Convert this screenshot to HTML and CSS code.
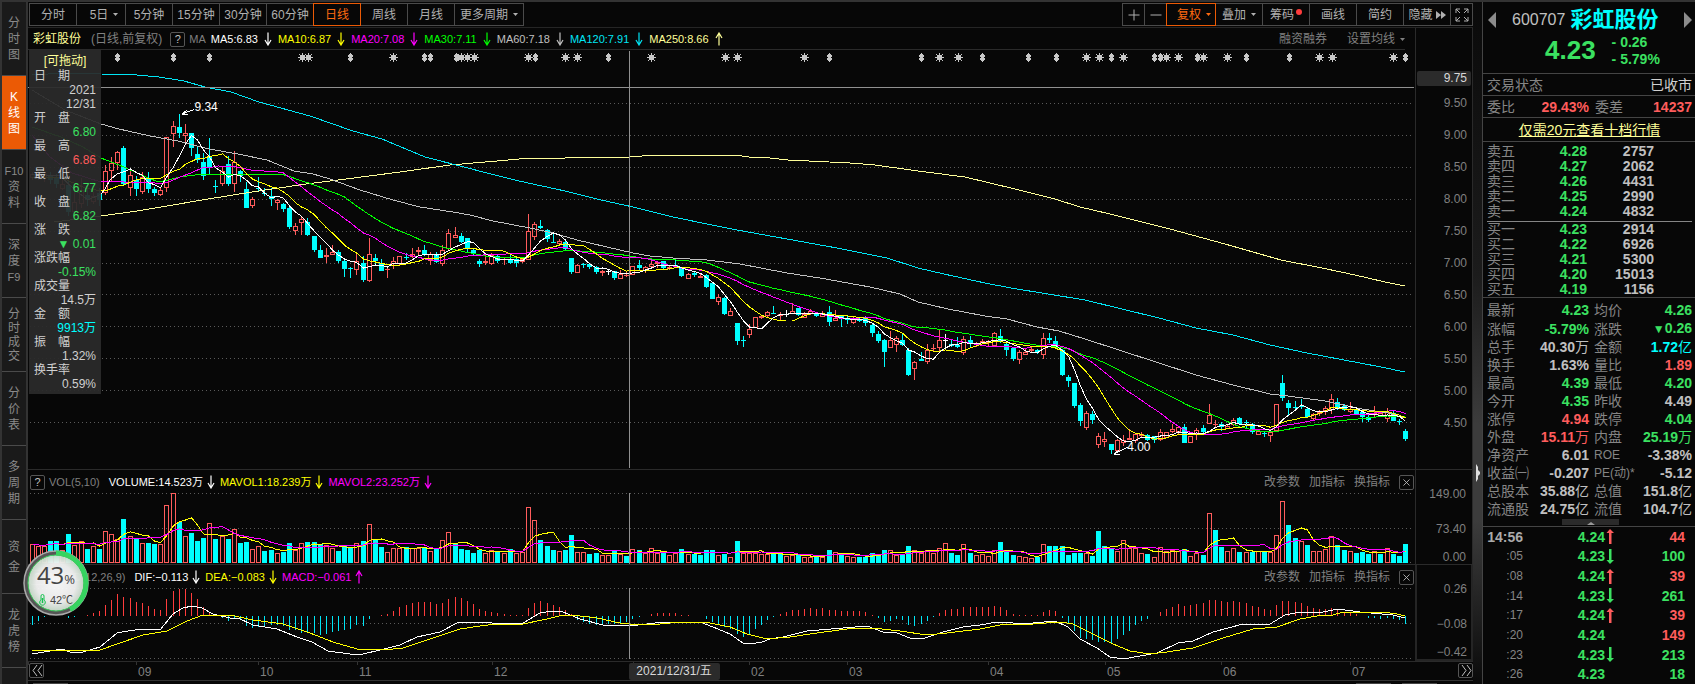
FILE: index.html
```html
<!DOCTYPE html>
<html lang="zh-CN">
<head>
    <meta charset="UTF-8">
    <meta name="viewport" content="width=device-width, initial-scale=1.0">
    <title>彩虹股份 600707</title>
    <link rel="stylesheet" href="styles.css">
</head>
<body>
    <svg class="sprite" aria-hidden="true">
        <symbol id="down" viewBox="0 0 8 14"><path d="M4 0.500V12M1 8l3 5 3-5" fill="none" stroke="currentColor" stroke-width="1.200"/></symbol>
        <symbol id="up" viewBox="0 0 8 14"><path d="M4 13.500V2M1 6l3-5 3 5" fill="none" stroke="currentColor" stroke-width="1.200"/></symbol>
        <symbol id="caret" viewBox="0 0 5 3"><path d="M0 0h5L2.500 3z" fill="currentColor"/></symbol>
        <symbol id="close" viewBox="0 0 15 15"><path d="M4 4l7 7M11 4l-7 7" fill="none" stroke="currentColor"/></symbol>
        <symbol id="fat-up" viewBox="0 0 8 15"><path d="M4 0L0.500 4H3v11h2.500V4H8z" fill="#ff5c5c"/></symbol>
        <symbol id="fat-down" viewBox="0 0 8 15"><path d="M4 15L0.500 11H3V0h2.500v11H8z" fill="#3be161"/></symbol>
    </svg>

    <nav class="side-nav">
        <a href="#"><span>分</span><span>时</span><span>图</span></a>
        <a href="#" class="active"><span>K</span><span>线</span><span>图</span></a>
        <a href="#"><span class="latin">F10</span><span>资</span><span>料</span></a>
        <a href="#"><span>深</span><span>度</span><span class="latin">F9</span></a>
        <a href="#" class="tight"><span>分</span><span>时</span><span>成</span><span>交</span></a>
        <a href="#"><span>分</span><span>价</span><span>表</span></a>
        <a href="#"><span>多</span><span>周</span><span>期</span></a>
        <a href="#" class="loose"><span>资</span><span>金</span></a>
        <a href="#"><span>龙</span><span>虎</span><span>榜</span></a>
    </nav>

    <main class="center">
        <div class="toolbar">
            <div class="btn-group">
                <button>分时</button>
                <button class="with-caret">5日<svg class="caret"><use href="#caret"/></svg></button>
                <button>5分钟</button>
                <button>15分钟</button>
                <button>30分钟</button>
                <button>60分钟</button>
                <button class="active">日线</button>
                <button>周线</button>
                <button>月线</button>
                <button class="wide">更多周期<svg class="caret"><use href="#caret"/></svg></button>
            </div>
            <div class="btn-group">
                <button class="square" aria-label="放大"><svg width="12" height="12"><path d="M6 0.500v11M0.500 6h11" stroke="currentColor"/></svg></button>
                <button class="square" aria-label="缩小"><svg width="12" height="12"><path d="M0.500 6h11" stroke="currentColor"/></svg></button>
                <button class="active with-caret">复权<svg class="caret"><use href="#caret"/></svg></button>
                <button>叠加<svg class="caret"><use href="#caret"/></svg></button>
                <button>筹码<i class="dot"></i></button>
                <button>画线</button>
                <button>简约</button>
                <button>隐藏<svg class="ff" viewBox="0 0 10 8"><path d="M0 0l5 4-5 4zM5 0l5 4-5 4z" fill="currentColor"/></svg></button>
                <button class="square" aria-label="全屏"><svg width="14" height="14"><path d="M1 5V1h4M9 1h4v4M13 9v4H9M5 13H1V9M1 1l4 4M13 1L9 5M13 13L9 9M1 13l4-4" fill="none" stroke="currentColor"/></svg></button>
            </div>
        </div>

        <section class="pane price-pane">
            <div class="plot">
                <div class="legend legend-line">
                    <b class="name">彩虹股份</b>
                    <span class="mode">(日线,前复权)</span>
                    <button class="help">?</button>
                    <span class="dim ma-tag">MA</span>
                    <span class="item white">MA5:6.83<svg><use href="#down"/></svg></span>
                    <span class="item yellow">MA10:6.87<svg><use href="#down"/></svg></span>
                    <span class="item magenta">MA20:7.08<svg><use href="#down"/></svg></span>
                    <span class="item lime">MA30:7.11<svg><use href="#down"/></svg></span>
                    <span class="item silver">MA60:7.18<svg><use href="#down"/></svg></span>
                    <span class="item cyan">MA120:7.91<svg><use href="#down"/></svg></span>
                    <span class="item cream">MA250:8.66<svg><use href="#up"/></svg></span>
                    <div class="links">
                        <a href="#">融资融券</a>
                        <a href="#">设置均线<svg class="caret"><use href="#caret"/></svg></a>
                    </div>
                </div>
                <div class="canvas">
                    <svg id="price" viewBox="28 50 1387 419" preserveAspectRatio="none"></svg>
                    <span class="mark mark-high">9.34</span>
                    <span class="mark mark-low">4.00</span>
                    <aside class="info">
                        <div class="info-title">[可拖动]</div>
                        <dl>
                            <dt><i>日</i><i>期</i></dt><dd>2021<br>12/31</dd>
                            <dt><i>开</i><i>盘</i></dt><dd class="green">6.80</dd>
                            <dt><i>最</i><i>高</i></dt><dd class="red">6.86</dd>
                            <dt><i>最</i><i>低</i></dt><dd class="green">6.77</dd>
                            <dt><i>收</i><i>盘</i></dt><dd class="green">6.82</dd>
                            <dt><i>涨</i><i>跌</i></dt><dd class="green">▼ 0.01</dd>
                            <dt>涨跌幅</dt><dd class="green">-0.15%</dd>
                            <dt>成交量</dt><dd>14.5万</dd>
                            <dt><i>金</i><i>额</i></dt><dd class="aqua">9913万</dd>
                            <dt><i>振</i><i>幅</i></dt><dd>1.32%</dd>
                            <dt>换手率</dt><dd>0.59%</dd>
                        </dl>
                    </aside>
                </div>
            </div>
            <div class="axis price-axis">
                <span class="cursor-price">9.75</span>
                <div class="ticks">
                    <span>9.50</span><span>9.00</span><span>8.50</span><span>8.00</span><span>7.50</span><span>7.00</span>
                    <span>6.50</span><span>6.00</span><span>5.50</span><span>5.00</span><span>4.50</span>
                </div>
            </div>
        </section>

        <section class="pane">
            <div class="plot">
                <div class="legend">
                    <button class="help">?</button>
                    <span class="dim ind-name">VOL(5,10)</span>
                    <span class="item white">VOLUME:14.523万<svg><use href="#down"/></svg></span>
                    <span class="item yellow">MAVOL1:18.239万<svg><use href="#down"/></svg></span>
                    <span class="item magenta">MAVOL2:23.252万<svg><use href="#down"/></svg></span>
                    <div class="links small">
                        <a href="#">改参数</a><a href="#">加指标</a><a href="#">换指标</a>
                        <button class="help" aria-label="关闭"><svg width="15" height="15"><use href="#close"/></svg></button>
                    </div>
                </div>
                <svg id="volume" class="sub" viewBox="28 493 1387 71" preserveAspectRatio="none"></svg>
            </div>
            <div class="axis sub-axis"><span>149.00</span><span>73.40</span><span>0.00</span></div>
        </section>

        <section class="pane macd-pane">
            <div class="plot">
                <div class="legend">
                    <button class="help">?</button>
                    <span class="dim ind-name">MACD(12,26,9)</span>
                    <span class="item white">DIF:−0.113<svg><use href="#down"/></svg></span>
                    <span class="item yellow">DEA:−0.083<svg><use href="#down"/></svg></span>
                    <span class="item magenta">MACD:−0.061<svg><use href="#up"/></svg></span>
                    <div class="links small">
                        <a href="#">改参数</a><a href="#">加指标</a><a href="#">换指标</a>
                        <button class="help" aria-label="关闭"><svg width="15" height="15"><use href="#close"/></svg></button>
                    </div>
                </div>
                <svg id="macd" class="sub" viewBox="28 588 1387 73" preserveAspectRatio="none"></svg>
            </div>
            <div class="axis sub-axis"><span>0.26</span><span>−0.08</span><span>−0.42</span></div>
        </section>

        <div class="date-row">
            <div class="months" id="months">
                <button class="help page-btn" aria-label="向前"><svg width="15" height="15"><path d="M7 2L3 7.500l4 5.500M12 2L8 7.500l4 5.500" fill="none" stroke="currentColor"/></svg></button>
                <span class="cursor-date">2021/12/31/五</span>
            </div>
            <div class="date-end"><button class="help" aria-label="向后"><svg width="15" height="15"><path d="M3 2l4 5.500L3 13M8 2l4 5.500L8 13" fill="none" stroke="currentColor"/></svg></button></div>
        </div>
        <div class="bottom-strip"><i></i><i></i><i></i></div>
    </main>

    <div class="splitter"><svg width="5" height="18"><path d="M0 0l2 3v3l2 2v2l-2 2v3l-2 3z" fill="#ddd"/></svg></div>

    <aside class="quote">
        <header>
            <div class="stock">
                <button aria-label="上一只"><svg width="8" height="16"><path d="M8 0v16L0 8z" fill="#8c8c8c"/></svg></button>
                <span class="code">600707</span><strong>彩虹股份</strong>
                <button class="next" aria-label="下一只"><svg width="8" height="16"><path d="M0 0v16l8-8z" fill="#8c8c8c"/></svg></button>
            </div>
            <div class="last">
                <b class="big">4.23</b>
                <div class="diff"><span>- 0.26</span><span>- 5.79%</span></div>
            </div>
        </header>
        <div class="line"><span>交易状态</span><span class="state">已收市</span></div>
        <div class="line quad"><span>委比</span><b class="red">29.43%</b><span>委差</span><b class="red">14237</b></div>
        <div class="line promo"><a href="#">仅需20元查看十档行情</a></div>
        <div class="book">
            <table>
                <tr><th>卖五</th><td>4.28</td><td>2757</td></tr>
                <tr><th>卖四</th><td>4.27</td><td>2062</td></tr>
                <tr><th>卖三</th><td>4.26</td><td>4431</td></tr>
                <tr><th>卖二</th><td>4.25</td><td>2990</td></tr>
                <tr><th>卖一</th><td>4.24</td><td>4832</td></tr>
            </table>
            <table>
                <tr><th>买一</th><td>4.23</td><td>2914</td></tr>
                <tr><th>买二</th><td>4.22</td><td>6926</td></tr>
                <tr><th>买三</th><td>4.21</td><td>5300</td></tr>
                <tr><th>买四</th><td>4.20</td><td>15013</td></tr>
                <tr><th>买五</th><td>4.19</td><td>1156</td></tr>
            </table>
        </div>
        <table class="stats">
            <tr><th>最新</th><td class="green">4.23</td><th>均价</th><td class="green">4.26</td></tr>
            <tr><th>涨幅</th><td class="green">-5.79%</td><th>涨跌</th><td class="green"><small>▼</small>0.26</td></tr>
            <tr><th>总手</th><td>40.30<i>万</i></td><th>金额</th><td class="aqua">1.72<i>亿</i></td></tr>
            <tr><th>换手</th><td>1.63%</td><th>量比</th><td class="red">1.89</td></tr>
            <tr><th>最高</th><td class="green">4.39</td><th>最低</th><td class="green">4.20</td></tr>
            <tr><th>今开</th><td class="green">4.35</td><th>昨收</th><td>4.49</td></tr>
            <tr><th>涨停</th><td class="red">4.94</td><th>跌停</th><td class="green">4.04</td></tr>
            <tr><th>外盘</th><td class="red">15.11<i>万</i></td><th>内盘</th><td class="green">25.19<i>万</i></td></tr>
            <tr><th>净资产</th><td>6.01</td><th class="en">ROE</th><td>-3.38%</td></tr>
            <tr><th>收益㈠</th><td>-0.207</td><th class="en">PE(动)*</th><td>-5.12</td></tr>
            <tr><th>总股本</th><td>35.88<i>亿</i></td><th>总值</th><td>151.8<i>亿</i></td></tr>
            <tr><th>流通股</th><td>24.75<i>亿</i></td><th>流值</th><td>104.7<i>亿</i></td></tr>
        </table>
        <button class="fold" aria-label="收起"><svg width="8" height="3"><path d="M0 3h8L4 0z" fill="#999"/></svg></button>
        <ul class="ticks-list">
            <li class="first"><time>14:56</time><b>4.24</b><svg><use href="#fat-up"/></svg><em class="red">44</em></li>
            <li><time>:05</time><b>4.23</b><svg><use href="#fat-down"/></svg><em>100</em></li>
            <li><time>:08</time><b>4.24</b><svg><use href="#fat-up"/></svg><em class="red">39</em></li>
            <li><time>:14</time><b>4.23</b><svg><use href="#fat-down"/></svg><em>261</em></li>
            <li><time>:17</time><b>4.24</b><svg><use href="#fat-up"/></svg><em class="red">39</em></li>
            <li><time>:20</time><b>4.24</b><svg></svg><em class="red">149</em></li>
            <li><time>:23</time><b>4.23</b><svg><use href="#fat-down"/></svg><em>213</em></li>
            <li><time>:26</time><b>4.23</b><svg></svg><em>18</em></li>
        </ul>
    </aside>

    <div class="monitor">
        <svg class="ring" viewBox="0 0 66 66">
            <defs>
                <radialGradient id="ball"><stop offset="0" stop-color="#fff"/><stop offset="0.700" stop-color="#f2f2f2"/><stop offset="1" stop-color="#c9dccb"/></radialGradient>
            </defs>
            <circle cx="33" cy="33" r="28" fill="url(#ball)" fill-opacity="0.960"/>
            <circle cx="33" cy="33" r="30" fill="none" stroke="#555" stroke-width="4"/>
            <circle cx="33" cy="33" r="32" fill="none" stroke="#aaa" stroke-width="1.500"/>
            <path d="M33 3a30 30 0 0 1 14 56.500" fill="none" stroke="#35d460" stroke-width="5"/>
            <circle cx="33" cy="33" r="28" fill="none" stroke="#3fce5f" stroke-width="1"/>
        </svg>
        <div class="load">43<small>%</small></div>
        <div class="temp"><svg width="7" height="12" viewBox="0 0 7 12"><path d="M2 6V2a1.500 1.500 0 0 1 3 0v4a2.800 2.800 0 1 1-3 0z" fill="none" stroke="#17c150"/><path d="M3.500 4v5" stroke="#17c150" stroke-width="1.500"/></svg>42℃</div>
    </div>

    <script src="chart.js"></script>
</body>
</html>
```
FILE: styles.css
```css
* {
    box-sizing: border-box;
}

body {
    margin: 0;
    height: 100vh;
    min-height: 684px;
    display: flex;
    background: #070707;
    color: #c0c0c0;
    font: 12px/14px "Liberation Sans", "Noto Sans CJK SC", sans-serif;
    overflow: hidden;
    border-top: 2px solid #333;
}

a {
    color: inherit;
    text-decoration: none;
}

button {
    margin: 0;
    padding: 0;
    border: 0;
    background: none;
    color: inherit;
    font: inherit;
}

i, em {
    font-style: normal;
}

.sprite {
    position: absolute;
    width: 0;
    height: 0;
}

.white { color: #fff; }
.yellow { color: #ff0; }
.magenta { color: #f0f; }
.lime { color: #0f0; }
.silver { color: #c0c0c0; }
.cyan { color: #00e5f5; }
.cream { color: #ffff99; }
.green { color: #3be161; }
.red { color: #ff5c5c; }
.aqua { color: #0ff; }

/* left navigation */
.side-nav {
    width: 28px;
    background: #1a1a1a;
    border-left: 2px solid #333;
    border-right: 2px solid #333;
}

.side-nav a {
    height: 74px;
    display: flex;
    flex-direction: column;
    align-items: center;
    justify-content: center;
    line-height: 16px;
    color: #8a8a8a;
    border-bottom: 1px solid #4a4a4a;
}

.side-nav a.active {
    background: #eb5a05;
    color: #fff;
}

.side-nav a.tight { line-height: 14px; }
.side-nav a.loose { line-height: 20px; }
.side-nav .latin { font-size: 11px; }

/* centre column */
.center {
    flex: 1;
    min-width: 0;
    display: flex;
    flex-direction: column;
}

.toolbar {
    height: 26px;
    padding: 1px 0 0 1px;
    display: flex;
    justify-content: space-between;
    border-bottom: 1px solid #252525;
}

.btn-group {
    display: flex;
}

.btn-group button {
    width: 48px;
    height: 23px;
    margin-right: -1px;
    display: flex;
    align-items: center;
    justify-content: center;
    border: 1px solid #4a4a4a;
    color: #b0b0b0;
    white-space: nowrap;
}

.btn-group button.square { width: 23px; }
.btn-group button.wide { width: 70px; }
.btn-group button.with-caret { width: 50px; padding-left: 6px; }

.btn-group button:last-child { margin-right: 0; }

.btn-group button.active {
    border-color: #eb5a05;
    color: #ff6a10;
    position: relative;
}

.caret {
    width: 5px;
    height: 3px;
    margin-left: 5px;
    vertical-align: middle;
}

.dot {
    width: 6px;
    height: 6px;
    margin: -6px 0 0 2px;
    border-radius: 50%;
    background: #ff3c3c;
}

.ff {
    width: 10px;
    height: 8px;
    margin-left: 3px;
}

.pane {
    display: flex;
    border-bottom: 1px solid #2a2a2a;
}

.price-pane {
    flex: 1;
    min-height: 0;
}

.plot {
    flex: 1;
    min-width: 0;
    display: flex;
    flex-direction: column;
}

.legend {
    height: 23px;
    padding: 1px 0 0 2px;
    display: flex;
    align-items: center;
    font-size: 11px;
    white-space: nowrap;
}

.legend-line {
    height: 22px;
    margin-right: 10px;
    padding-left: 5px;
    border-bottom: 1px solid #2a2a2a;
}

.legend .name {
    font-size: 12px;
    font-weight: normal;
    color: #ffff99;
}

.mode {
    margin: 0 8px 0 10px;
    font-size: 12px;
    color: #808080;
}

.dim {
    color: #808080;
}

.ma-tag {
    margin: 0 5px 0 4px;
}

.ind-name {
    margin: 0 9px 0 4px;
}

.help {
    width: 15px;
    height: 15px;
    flex: none;
    display: flex;
    align-items: center;
    justify-content: center;
    border: 1px solid #555;
    border-radius: 2px;
    color: #c0c0c0;
    font-size: 11px;
    line-height: 13px;
}

.item {
    display: flex;
    align-items: center;
    margin-right: 5px;
}

.legend-line .item {
    margin-right: 6px;
}

.item svg {
    width: 8px;
    height: 14px;
    margin-left: 6px;
}

.pane:not(.price-pane) .item svg {
    margin-left: 4px;
}

.links {
    margin-left: auto;
    display: flex;
    align-items: center;
    gap: 20px;
    font-size: 12px;
    color: #808080;
}

.links.small {
    gap: 9px;
    margin-right: 1px;
}

.canvas {
    position: relative;
    flex: 1;
    min-height: 0;
}

.canvas > svg, .sub {
    display: block;
    width: 100%;
    height: 100%;
    shape-rendering: crispEdges;
}

.sub {
    height: 71px;
}

.macd-pane .sub {
    height: 73px;
}

.canvas path, .sub path {
    fill: none;
    vector-effect: non-scaling-stroke;
}

.canvas path.event {
    fill: #c8c8c8;
}

.mark {
    position: absolute;
    color: #fff;
}

.mark-high { left: 12%; top: 12%; }
.mark-low { left: 79.250%; top: 93%; }

/* floating box with values under the cursor */
.info {
    position: absolute;
    left: 1px;
    top: 0;
    width: 72px;
    padding: 4px 5px 3px;
    background: rgba(43, 43, 43, 0.94);
    color: #d0d0d0;
}

.info-title {
    text-align: center;
    color: #ffff99;
}

.info dl {
    margin: 1px 0 0;
}

.info dt {
    width: 36px;
    display: flex;
    justify-content: space-between;
}

.info dd {
    margin: 0;
    text-align: right;
}

.axis {
    width: 58px;
    padding-right: 6px;
    display: flex;
    flex-direction: column;
    align-items: flex-end;
    border-left: 1px solid #2a2a2a;
    border-right: 1px solid #2a2a2a;
    color: #808080;
}

.price-axis {
    padding: 43px 1px 30px 1px;
}

.cursor-price {
    width: 100%;
    height: 15px;
    padding-right: 4px;
    border-radius: 2px;
    background: #2b2b2b;
    color: #d8d8d8;
    line-height: 15px;
    text-align: right;
}

.ticks {
    flex: 1;
    padding: 1px 4px 0 0;
    display: flex;
    flex-direction: column;
}

.ticks span {
    flex: 1;
    display: flex;
    align-items: center;
}

.sub-axis {
    padding-top: 17px;
}

.sub-axis span:nth-child(2) {
    margin: 21px 0 14px;
}

.macd-pane .axis {
    border: 2px solid #252525;
    border-top: 0;
    padding-right: 4px;
}

.date-row {
    height: 19px;
    display: flex;
    border-bottom: 1px solid #333;
}

.months {
    position: relative;
    flex: 1;
    display: flex;
    color: #808080;
}

.month {
    padding: 3px 0 0 2px;
    background: linear-gradient(#333, #333) 0 0 / 1px 3px no-repeat;
}

.page-btn {
    position: absolute;
    left: 1px;
    top: 1px;
}

.cursor-date {
    position: absolute;
    left: 43.300%;
    top: 1px;
    width: 91px;
    height: 17px;
    border-radius: 2px;
    background: #2b2b2b;
    color: #d8d8d8;
    line-height: 17px;
    text-align: center;
}

.date-end {
    width: 58px;
    padding: 1px 0 0 43px;
}

.bottom-strip {
    height: 3px;
    padding: 2px 36px 0 5px;
    display: flex;
    gap: 11px;
}

.bottom-strip i {
    width: 35px;
    background: #444;
}

.bottom-strip i:first-child {
    margin-right: auto;
}

.splitter {
    width: 9px;
    display: flex;
    align-items: center;
    padding: 260px 0 0 3px;
    background: linear-gradient(#0a0a0a, #1c1c1c 40%, #3c3c3c 62%, #3c3c3c 76%, #0a0a0a);
}

/* quote panel */
.quote {
    width: 213px;
    display: flex;
    flex-direction: column;
    border-left: 1px solid #444;
    font-size: 14px;
}

.quote header {
    height: 72px;
    border-bottom: 1px solid #444;
}

.stock {
    display: flex;
    align-items: center;
    height: 35px;
    padding: 0 3px 0 5px;
    line-height: 24px;
}

.code {
    margin: 0 5px 0 16px;
    font-size: 16px;
}

.stock strong {
    font-size: 22px;
    color: #0ff;
}

.stock button {
    height: 16px;
    line-height: 0;
}

.stock .next {
    margin-left: auto;
}

.last {
    display: flex;
    gap: 16px;
    padding-left: 62px;
    color: #3be161;
}

.big {
    font-size: 26px;
    line-height: 26px;
}

.diff {
    display: flex;
    flex-direction: column;
    margin-top: -3px;
    font-weight: bold;
    line-height: 17px;
}

.line {
    height: 22px;
    padding: 0 3px 0 4px;
    display: flex;
    align-items: center;
    justify-content: space-between;
    border-bottom: 1px solid #444;
    color: #858585;
}

.line .state {
    color: #d0d0d0;
}

.line b {
    text-align: right;
}

.quad {
    display: grid;
    grid-template-columns: 36px 66px 36px 1fr;
}

.quad span:nth-child(3) {
    padding-left: 6px;
}

.stats th:nth-child(3) {
    padding-left: 3px;
}

.promo {
    height: 24px;
    justify-content: center;
    color: #ffff99;
}

.promo a {
    text-decoration: underline;
}

.quote table {
    width: 100%;
    border-collapse: collapse;
    table-layout: fixed;
}

.quote th {
    padding: 0;
    color: #858585;
    font-weight: normal;
    text-align: left;
    white-space: nowrap;
}

.quote .stats th:nth-child(3) {
    padding-left: 5px;
}

.quote td {
    padding: 0;
    text-align: right;
    font-weight: bold;
    white-space: nowrap;
}

.quote td i {
    font-weight: normal;
}

.book {
    padding: 2px 3px 0 4px;
    border-bottom: 1px solid #444;
}

.book tr {
    height: 15px;
    line-height: 15px;
}

.book th { width: 36px; }
.book td:nth-child(2) { width: 64px; color: #3be161; }

.quote .book td:nth-child(3) {
    padding-right: 38px;
}

.book table + table {
    margin-top: 2px;
    border-top: 1px solid #858585;
}

.quote .stats {
    width: 205px;
    margin: 3px 0 0 4px;
}

.stats tr {
    height: 18px;
    line-height: 18px;
}

.stats th { width: 42px; }
.stats td:nth-child(2) { width: 60px; }
.stats td:nth-child(4) { width: 61px; }
.stats th.en { font-size: 12px; }
.stats small { font-size: 12px; }

.fold {
    width: 57px;
    height: 6px;
    margin: 1px 0 1px 79px;
    background: #2b2b2b;
    line-height: 0;
}

.ticks-list {
    flex: 1;
    margin: 0;
    padding: 0;
    list-style: none;
    display: flex;
    flex-direction: column;
    border-top: 1px solid #444;
}

.ticks-list li {
    flex: 1;
    display: grid;
    grid-template-columns: 40px 82px 14px 1fr;
    align-items: center;
    padding-right: 10px;
    text-align: right;
    color: #3be161;
}

.ticks-list time {
    color: #858585;
    font-size: 12px;
}

.ticks-list .first time {
    color: #aaa;
    font-size: 14px;
    font-weight: bold;
}

.ticks-list svg {
    width: 8px;
    height: 15px;
    margin-left: 1px;
}

.ticks-list em {
    font-weight: bold;
}

/* desktop load ball */
.monitor {
    position: absolute;
    left: 23px;
    bottom: 68px;
    width: 66px;
    height: 66px;
    color: #444;
    text-align: center;
}

.ring {
    position: absolute;
    inset: 0;
}

.load {
    position: relative;
    padding-top: 13px;
    font: 24px/24px "Open Sans", sans-serif;
}

.load small {
    font-size: 13px;
}

.temp {
    position: relative;
    margin-top: 2px;
    font-size: 11px;
}

.temp svg {
    margin-right: 4px;
    vertical-align: -2px;
}
```
FILE: chart.js
```javascript
// one entry per day: kind (r up, c down, w flat), high, body top, body bottom, low
const candles = `
r 172 174 178 180|r 171 173 177 180|r 172 174 178 182|c 172 176 180 184|c 174 177 184 188|r 180 184 189 190|c 180 185 212 216|r 190 202 212 214|
r 178 190 204 208|c 184 195 200 206|r 192 196 202 204|c 188 193 200 206|r 165 171 193 195|r 157 163 171 181|r 151 152 163 170|c 146 148 184 186|
r 170 175 188 196|c 176 180 189 196|r 172 177 192 194|c 172 179 189 193|c 187 189 193 196|r 187 190 195 196|r 137 137 188 192|r 121 126 134 147|
c 114 127 133 138|r 124 133 136 143|c 133 133 148 156|c 146 154 160 163|c 153 162 176 180|c 138 157 167 174|c 180 186 187 193|r 167 171 184 186|
c 156 164 184 186|r 151 162 184 192|c 170 171 176 182|c 182 189 208 208|r 197 199 206 208|c 177 188 189 191|c 188 193 194 196|c 188 196 199 206|
r 199 200 203 210|c 203 204 209 212|c 207 208 227 229|r 223 226 231 235|r 217 219 223 235|c 218 222 235 236|c 236 236 250 252|c 245 250 258 258|
r 248 255 257 263|r 245 252 255 255|c 250 252 261 263|c 259 261 269 277|c 267 268 269 278|r 253 261 270 275|c 256 263 280 282|r 238 254 281 282|
c 254 258 261 265|c 259 263 271 271|r 267 269 270 278|r 257 261 264 269|r 256 256 264 265|c 253 257 258 260|r 248 254 257 258|r 247 250 252 256|
c 245 250 255 256|r 252 254 261 265|c 252 255 262 263|r 245 250 264 266|r 229 233 249 250|r 227 235 238 238|c 233 236 242 243|c 238 238 248 252|
c 249 250 254 255|c 259 261 264 267|r 255 261 263 265|r 253 255 264 265|c 255 256 261 263|r 257 259 260 265|c 255 260 263 264|c 258 259 263 267|
r 257 259 262 263|r 214 231 260 260|r 222 224 237 240|c 220 226 228 229|c 229 230 239 242|c 234 242 243 243|r 239 241 244 244|c 241 242 249 250|
c 258 258 272 274|r 264 265 273 273|c 263 264 265 268|c 263 264 267 269|c 266 267 272 274|r 270 271 273 276|w 269 271 272 275|c 271 271 278 280|
r 270 274 279 279|r 272 275 276 277|r 266 266 275 275|c 260 265 268 271|r 266 267 271 273|r 260 264 267 269|r 261 262 264 268|c 261 261 268 269|
r 266 267 269 270|c 260 265 266 268|c 267 268 276 277|r 273 274 279 279|c 271 273 275 277|r 273 276 278 278|c 274 275 287 288|c 283 283 299 299|
r 294 297 302 305|c 297 298 314 315|r 308 311 316 316|c 323 323 341 345|c 336 340 341 347|r 324 329 335 338|r 317 317 328 328|r 315 316 318 319|
r 311 312 316 317|c 306 313 314 314|r 312 314 316 321|w 310 314 315 317|r 303 311 314 314|c 308 308 315 316|r 312 314 318 318|r 309 311 314 315|
c 312 313 316 317|r 311 314 317 317|c 306 312 322 326|r 310 318 321 321|c 315 315 319 327|c 315 319 320 324|r 317 319 323 324|c 317 319 321 322|
c 317 318 323 326|c 323 325 333 337|c 331 334 341 343|c 339 340 352 367|r 331 340 348 348|r 336 338 345 352|c 333 340 345 346|c 348 350 375 376|
r 361 362 369 380|c 352 359 361 361|r 344 350 362 364|r 344 348 349 352|r 329 340 348 352|w 334 340 341 348|c 340 344 346 347|c 337 345 347 348|
r 336 339 353 355|c 336 340 344 347|r 342 343 345 347|r 339 341 343 344|r 340 341 343 346|r 332 333 346 347|c 329 336 341 343|c 342 344 350 356|
c 347 348 359 361|r 350 352 360 364|r 349 352 355 355|r 347 349 351 353|c 349 350 352 354|r 333 338 355 359|c 333 338 340 343|c 336 341 347 348|
c 349 350 375 376|c 375 377 381 387|c 383 383 406 408|c 403 405 421 426|r 411 413 428 430|c 411 414 420 424|r 433 436 445 448|r 432 439 442 447|
c 444 444 450 454|r 439 440 451 452|r 435 440 443 446|r 429 438 440 440|r 433 434 441 443|r 432 434 436 437|c 434 435 440 441|c 436 436 440 443|
r 429 432 440 441|r 432 432 438 438|r 424 429 432 433|r 426 427 432 434|c 424 427 443 443|r 436 436 443 443|r 428 430 434 440|c 425 428 432 433|
r 404 415 424 424|r 420 424 425 428|c 422 424 427 431|r 424 426 429 429|r 418 420 425 426|c 417 418 424 424|c 420 422 423 428|c 423 424 432 434|
r 430 431 435 435|c 431 433 434 437|r 430 432 436 442|r 404 404 431 431|c 375 383 398 401|c 400 403 408 415|c 401 407 408 411|c 399 406 407 409|
c 407 409 417 418|r 413 414 419 420|r 410 412 414 416|r 406 408 411 415|r 394 399 410 414|c 398 402 408 410|c 404 406 410 411|r 402 409 412 413|
c 408 409 414 415|c 411 412 417 422|c 415 417 420 422|r 406 413 415 417|r 411 413 416 417|r 408 412 419 422|c 411 413 421 421|c 419 421 422 425|
c 429 431 439 441`.trim().split('|').map(row => {
    const [kind, ...v] = row.trim().split(' ');
    return [kind, ...v.map(Number)];
});

// bar heights, negative = falling day
const volumes = [
    19, 17, 17, -22, -22, 13, -29, 18, 22, -14, 17, -14, 32, 29, 24, -44, 27, -24, 20, -20, -19, 19, 58, 70, -41,
    27, -30, -22, -25, 40, -24, 27, -24, 34, -20, -21, 14, 17, -12, -13, 10, -11, -20, 13, 20, -21, -21, -19, 18, 15,
    -12, -17, -15, 20, -22, 39, -23, -16, 11, 15, 15, -16, 15, 15, -15, 12, -14, 23, 31, -19, -14, -13, -10, -13, 10,
    13, -11, 10, -14, 10, 11, 56, 43, -23, -17, -13, 12, -13, -28, 11, 11, -9, -10, 8, 8, -13, 9, -7, 14, -13,
    10, 15, 10, -10, 8, 10, -14, 9, -9, -8, -13, -13, 8, -9, 6, -22, 10, 10, 10, 9, 9, -9, -9, 7, 8,
    -8, 6, 6, -7, 6, -13, 11, -10, 7, 6, -6, -6, -10, -9, -13, 13, 8, -8, -17, 13, 10, 13, 10, 15, 20,
    -10, -8, 19, -10, 8, 9, 7, 13, -21, -11, -8, 7, 6, 5, -6, 19, -17, -17, -17, -8, -10, -10, 10, -7, -32,
    -17, -15, 12, 23, 15, 15, 10, -9, 6, 16, 12, 13, 12, -14, 7, 10, -8, 50, -33, -16, 12, 15, -11, 11, -11,
    12, -11, 11, 28, 62, -38, -25, 22, -18, 12, 12, 14, 27, -18, -13, 12, -10, -11, -9, 12, -9, 15, -9, -7, -19
];

const macdBars = [
    -9, -5, -1, 0, 0, 0, -2, -1, 0, 1, 3, 5, 11, 16, 22, 19, 18, 14, 13, 10, 7, 6, 17, 25, 27,
    27, 23, 17, 9, 4, 1, -2, -5, -3, -4, -10, -12, -11, -10, -9, -9, -10, -14, -14, -17, -17, -17, -19, -18, -16,
    -15, -14, -13, -9, -10, -3, 0, 1, 2, 5, 9, 11, 13, 14, 14, 14, 12, 13, 17, 19, 18, 15, 12, 7, 5,
    4, 3, 2, 1, 1, 1, 8, 13, 15, 13, 11, 9, 6, 2, -4, -6, -8, -9, -8, -8, -8, -7, -6, -3, -1,
    0, 2, 3, 3, 3, 3, 1, 1, 0, 0, -3, -6, -8, -11, -13, -18, -21, -18, -13, -9, -4, -1, 2, 4, 6,
    6, 7, 8, 7, 8, 6, 6, 5, 5, 5, 5, 4, 1, -2, -6, -5, -3, -4, -9, -10, -8, -5, -1, 3, 6,
    7, 7, 9, 9, 9, 9, 9, 10, 9, 6, 2, 1, 1, 1, 1, 4, 6, 5, -2, -7, -15, -22, -23, -24, -26,
    -26, -27, -23, -19, -15, -9, -5, -3, 0, 4, 7, 9, 12, 10, 11, 12, 13, 16, 16, 15, 14, 15, 14, 13, 10,
    9, 7, 6, 11, 15, 15, 14, 13, 10, 8, 7, 7, 8, 7, 4, 3, 2, 0, -2, -2, -3, -2, -3, -4, -8
];

const lead = {
    5: '32,174 60,176 75,190 88,200 101,194 105,189 110,180 117,174 126,171',
    10: '32,178 60,177 85,188 101,191 108,190 118,186 124,185 133,181 143,178 155,179',
    20: '32,135 50,157 72,173 101,182 112,181 124,182 143,182 155,183 161,184 171,181 180,177 191,173 202,168 213,167 218,166',
    30: '32,127 61,137 83,147 101,158 124,167 137,173 148,178 159,182 168,180 180,177 195,175 205,174 279,174'
};

const ma60 = '32,90 65,110 101,124 119,129 150,136 178,141 209,149 238,154 267,160 294,171 313,174 330,179 360,190 393,200 420,207 453,212 470,215 493,221 530,228 553,233 577,240 607,247 633,253 650,256 673,258 707,260 740,264 787,273 820,278 870,287 900,294 918,302 948,309 985,316 1007,319 1037,327 1059,331 1085,339 1122,351 1159,363 1196,375 1233,385 1270,394 1288,396 1325,401 1362,409 1388,413 1405,418';
const ma120 = '32,75 65,73 101,74 137,75 159,77 184,81 205,87 231,92 259,102 310,116 353,131 382,139 425,157 468,168 483,172 519,181 565,191 601,200 633,207 673,217 707,224 737,230 787,239 837,248 887,258 918,268 944,274 985,283 1011,288 1048,294 1085,300 1122,309 1159,318 1196,328 1233,335 1270,345 1307,353 1344,360 1381,367 1405,372';
const ma250 = '54,222 101,216 137,211 173,205 202,200 252,192 306,184 346,179 400,172 450,165 497,161 530,158 565,158 581,157 630,157 655,155 734,155 749,157 770,158 788,160 850,163 875,165 918,171 965,177 1015,189 1055,199 1080,207 1110,214 1170,229 1225,244 1281,260 1322,268 1355,275 1385,282 1405,286';
const dif = '32,654 50,651 62,649 73,653 83,652 100,647 117,633 128,631 142,629 160,630 173,614 183,608 192,606 202,608 213,614 230,618 238,618 253,625 277,629 297,637 312,642 328,651 350,654 363,654 380,650 400,645 417,637 440,632 457,623 480,622 503,624 523,623 540,613 552,611 563,612 580,619 603,625 630,626 647,624 663,622 680,622 700,622 713,627 730,634 743,643 750,644 762,642 770,639 783,637 807,631 843,628 867,626 883,632 897,633 910,638 922,639 943,632 963,627 980,625 997,622 1013,623 1033,623 1055,621 1068,627 1080,639 1097,648 1110,657 1123,659 1140,656 1157,653 1178,643 1193,641 1213,632 1243,624 1270,624 1285,615 1300,612 1323,612 1338,609 1360,612 1393,615 1405,618';
const dea = '32,650 67,650 100,650 120,643 143,635 167,631 187,621 203,615 230,615 253,620 283,624 310,633 333,642 357,649 383,650 403,648 433,638 460,629 480,626 497,624 523,624 547,619 563,615 580,616 597,618 620,623 630,624 660,624 680,622 710,623 730,627 747,634 767,639 790,637 817,633 847,629 873,628 900,631 927,635 947,633 980,629 1000,625 1033,624 1060,622 1073,624 1093,634 1113,644 1130,651 1150,654 1167,652 1193,648 1223,638 1253,629 1277,627 1300,619 1317,616 1333,615 1343,612 1383,612 1397,614 1405,616';

const suns = [302, 308, 393, 461, 467, 474, 528, 565, 577, 651, 725, 737, 804, 939, 958, 1086, 1099, 1123, 1166, 1178, 1203, 1227, 1319, 1332, 1393];
const arrows = [117, 173, 209, 350, 424, 430, 456, 535, 608, 829, 921, 982, 1028, 1056, 1111, 1154, 1160, 1197, 1246, 1289, 1405];

const colors = { r: '#ff5c5c', c: '#00ffff', w: '#ffffff' };
const dayX = i => Math.floor(32 + i * 6.1314) + 0.5;

function path(d, color, extra = '') {
    return `<path d="${d}" stroke="${color}" ${extra}/>`;
}

function line(points, color) {
    return path('M' + points.trim().split(' ').join('L'), color);
}

function grid(levels) {
    return levels.map(y => path(`M30 ${y}H1412`, '#5a5a5a', 'stroke-dasharray="1 3"')).join('');
}

function average(values, n, start) {
    const out = [];
    for (let i = start; i < values.length; i++) {
        const part = values.slice(Math.max(0, i - n + 1), i + 1);
        out.push(dayX(i) + ',' + (part.reduce((a, b) => a + b, 0) / part.length).toFixed(1));
    }
    return out.join(' ');
}

function drawPrice() {
    const levels = [103, 135, 167, 199, 231, 263, 294, 326, 358, 390, 422].map(y => y + 0.5);
    let html = grid(levels);
    candles.forEach(([kind, high, top, bottom, low], i) => {
        const x = dayX(i);
        const c = colors[kind];
        html += path(`M${x} ${high}V${top}M${x} ${bottom}V${low}`, c);
        if (kind === 'c') {
            html += `<rect x="${x - 2.5}" y="${top}" width="5" height="${Math.max(1, bottom - top)}" fill="${c}"/>`;
        } else if (bottom - top < 2) {
            html += path(`M${x - 2.5} ${top + 0.5}H${x + 2.5}`, c);
        } else {
            html += path(`M${x - 2} ${top + 0.5}h4V${bottom - 0.5}h-4z`, c);
        }
    });
    const closes = candles.map(c => c[0] === 'r' ? c[2] : c[3]);
    html += line(ma250, '#ffff99') + line(ma120, '#00e5f5') + line(ma60, '#c0c0c0');
    html += line(lead[30] + ' ' + average(closes, 30, 41), '#00ff00');
    html += line(lead[20] + ' ' + average(closes, 20, 31), '#ff00ff');
    html += line(lead[10] + ' ' + average(closes, 10, 21), '#ffff00');
    html += line(lead[5] + ' ' + average(closes, 5, 16), '#ffffff');

    suns.forEach(x => {
        html += `<rect x="${x - 2}" y="55" width="5" height="5" fill="#c8c8c8"/>`;
        html += path(`M${x + 0.5} 53v9M${x - 4} 57.5h9M${x - 3} 54l7 7M${x + 4} 54l-7 7`, '#c8c8c8');
    });
    arrows.forEach(x => {
        html += `<path class="event" d="M${x} 53h1v9h-1zM${x - 1} 54h3v7h-3zM${x - 2} 55h5v2h-5zM${x - 2} 58h5v2h-5z"/>`;
    });

    // cursor cross and high / low pointers
    html += path('M28 87.5H1414', '#909090') + path('M629.5 51V468', '#909090');
    html += path('M194 109.5L182 114M187 110L182 114L188 114.5', '#fff');
    html += path('M1128 447L1114 454M1119 450L1114 454L1120 455', '#fff');
    document.getElementById('price').innerHTML = html;
}

function drawVolume() {
    const base = 563;
    let html = grid([493.5, 528.5, 562.5]);
    volumes.forEach((v, i) => {
        const x = dayX(i);
        if (v < 0) {
            html += `<rect x="${x - 2.5}" y="${base + v}" width="5" height="${-v}" fill="#0ff"/>`;
        } else {
            html += path(`M${x - 2} ${base - 0.5}V${base - v + 0.5}h4V${base - 0.5}z`, '#ff5c5c');
        }
    });
    const tops = volumes.map(v => base - Math.abs(v));
    html += line(average(tops, 5, 0), '#ffff00') + line(average(tops, 10, 0), '#ff00ff');
    html += path('M629.5 493V564', '#909090');
    document.getElementById('volume').innerHTML = html;
}

function drawMacd() {
    const zero = 615.5;
    let html = grid([588.5, 623.5, 658.5]);
    macdBars.forEach((v, i) => {
        if (v) html += path(`M${dayX(i)} ${zero}v${-v}`, v > 0 ? '#ff3c3c' : '#00e5f5');
    });
    html += line(dif, '#ffffff') + line(dea, '#ffff00');
    html += path('M629.5 588V659', '#909090');
    document.getElementById('macd').innerHTML = html;
}

function drawMonths() {
    const starts = [28, 136, 258, 357, 492, 633, 749, 847, 988, 1105, 1221, 1350, 1415];
    const names = ['', '09', '10', '11', '12', '', '02', '03', '04', '05', '06', '07'];
    document.getElementById('months').insertAdjacentHTML('afterbegin', names.map((name, i) =>
        `<span class="month" style="width:${((starts[i + 1] - starts[i]) / 13.87).toFixed(2)}%">${name}</span>`).join(''));
}

drawPrice();
drawVolume();
drawMacd();
drawMonths();
```
